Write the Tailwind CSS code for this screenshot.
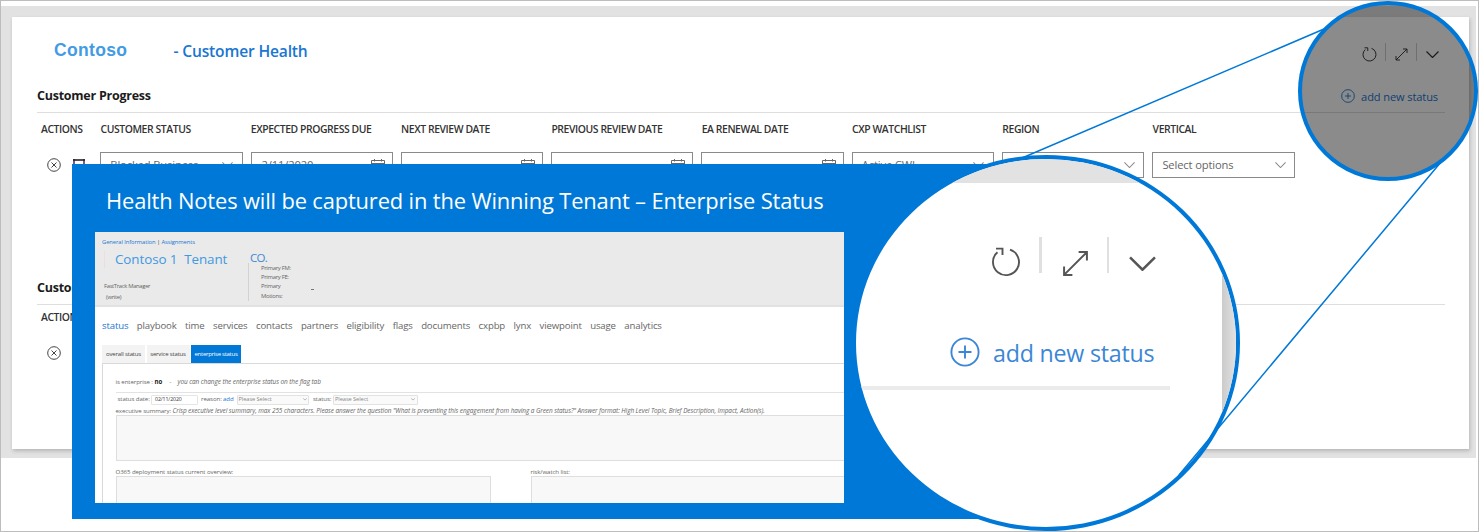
<!DOCTYPE html>
<html lang="en">
<head>
<meta charset="utf-8">
<title>Customer Health</title>
<script src="https://cdn.jsdelivr.net/npm/@tailwindcss/browser@4"></script>
</head>
<body class="bg-white">
<svg class="hidden">
  <symbol id="refresh" viewBox="0 0 30 30"><path d="M19 2.7A13 13 0 1 1 6.5 5.2M5 1.6H11.5V8" fill="none" stroke="currentColor" stroke-width="1.9"/></symbol>
  <symbol id="expand" viewBox="0 0 26 26"><path d="M2 24 24 2M16 2H24V10M2 16V24H10" fill="none" stroke="currentColor" stroke-width="1.9"/></symbol>
  <symbol id="chevron" viewBox="0 0 26 14"><path d="M1 1 13 13 25 1" fill="none" stroke="currentColor" stroke-width="2.4"/></symbol>
  <symbol id="plus" viewBox="0 0 30 30"><path d="M15 8.5V21.5M8.5 15H21.5" fill="none" stroke="currentColor" stroke-width="1.9"/><circle cx="15" cy="15" r="13.6" fill="none" stroke="currentColor" stroke-width="1.9"/></symbol>
  <symbol id="cancel" viewBox="0 0 14 14"><circle cx="7" cy="7" r="6.3" fill="none" stroke="currentColor"/><path d="M4.5 4.5 9.5 9.5M9.5 4.5 4.5 9.5" stroke="currentColor"/></symbol>
  <symbol id="calendar" viewBox="0 0 14 13"><path d="M.5 1.5H13.5V12.5H.5ZM.5 4.5H13.5M3.5 0V2.5M10.5 0V2.5" fill="none" stroke="currentColor"/></symbol>
</svg>

<div class="relative h-[532px] w-[1479px] overflow-hidden border border-[#bdbdbd] bg-white pt-[5px] pr-[2px] font-['Open_Sans','Noto_Sans',sans-serif]">
  <main class="h-[452px] bg-[#e2e2e2] pt-[11px] pr-[7px] pl-[11px]">
    <section class="h-[432px] bg-white pl-[25px] pr-[24px] shadow-[1px_2px_4px_rgba(0,0,0,0.2)]">
      <header class="flex h-[68px] items-center pl-[17px] pt-[2px]">
        <h1 class="mt-[-3px] w-[119.5px] font-['Liberation_Sans',sans-serif] text-[17.5px] leading-none font-bold tracking-[0.35px] text-[#429be3]">Contoso</h1>
        <h2 class="text-[15.6px] leading-none font-semibold tracking-[-0.17px] whitespace-nowrap text-[#1976d2]">- Customer Health</h2>
        <div class="mt-[5px] ml-auto flex items-center pr-[6px] text-[#333]">
          <svg class="size-[15px]"><use href="#refresh"/></svg>
          <i class="mt-[-6px] ml-[8px] h-[18px] w-px bg-[#ccc]"></i>
          <svg class="ml-[9px] size-[13px]"><use href="#expand"/></svg>
          <i class="mt-[-6px] ml-[8px] h-[18px] w-px bg-[#ccc]"></i>
          <svg class="ml-[9px] h-[7px] w-[13px]"><use href="#chevron"/></svg>
        </div>
      </header>

      <div class="flex h-[28px] items-center justify-between border-b border-[#dedede] pr-[7px] pb-[5px]">
        <h3 class="mt-px text-[12.5px] leading-none font-bold tracking-[-0.25px] text-[#1b1b1b]">Customer Progress</h3>
        <a class="flex items-center gap-[6px] text-[11.1px] leading-none tracking-[-0.12px] text-[#1976d2]"><svg class="size-[14px]"><use href="#plus"/></svg><span class="mt-px">add new status</span></a>
      </div>
      <div class="flex h-[32px] items-center pt-px text-[10.4px] leading-none font-semibold tracking-[-0.42px] whitespace-nowrap text-[#333]">
        <span class="w-[63.5px] pl-[4px]">ACTIONS</span>
        <span class="w-[150.3px]">CUSTOMER STATUS</span>
        <span class="w-[150.3px]">EXPECTED PROGRESS DUE</span>
        <span class="w-[150.3px]">NEXT REVIEW DATE</span>
        <span class="w-[150.3px]">PREVIOUS REVIEW DATE</span>
        <span class="w-[150.3px]">EA RENEWAL DATE</span>
        <span class="w-[150.3px]">CXP WATCHLIST</span>
        <span class="w-[150.3px]">REGION</span>
        <span>VERTICAL</span>
      </div>
      <div class="flex h-[40px] items-center text-[11.2px] leading-none tracking-[-0.14px] text-[#666]">
        <div class="flex w-[63.3px] items-center gap-[12px] pl-[10px] text-[#444]">
          <svg class="size-[14px]"><use href="#cancel"/></svg>
          <svg class="h-[12px] w-[12px]" viewBox="0 0 12 12"><path d="M1 0V12H11V0" fill="none" stroke="#6b2a7a" stroke-width="1.6"/><path d="M0 1H12" stroke="#222" stroke-width="1.6"/></svg>
        </div>
        <div class="grid grid-cols-[repeat(8,142.3px)] gap-[8px]">
          <div class="flex h-[26px] items-center justify-between border border-[#8a8a8a] px-[9px]">Blocked Business<svg class="h-[6px] w-[11px] text-[#888]"><use href="#chevron"/></svg></div>
          <div class="flex h-[26px] items-center justify-between border border-[#8a8a8a] pr-[7px] pl-[10px]">2/11/2020<svg class="h-[13px] w-[14px]"><use href="#calendar"/></svg></div>
          <div class="flex h-[26px] items-center justify-end border border-[#8a8a8a] pr-[7px]"><svg class="h-[13px] w-[14px]"><use href="#calendar"/></svg></div>
          <div class="flex h-[26px] items-center justify-end border border-[#8a8a8a] pr-[7px]"><svg class="h-[13px] w-[14px]"><use href="#calendar"/></svg></div>
          <div class="flex h-[26px] items-center justify-end border border-[#8a8a8a] pr-[7px]"><svg class="h-[13px] w-[14px]"><use href="#calendar"/></svg></div>
          <div class="flex h-[26px] items-center justify-between border border-[#8a8a8a] px-[9px]">Active CWL<svg class="h-[6px] w-[11px] text-[#888]"><use href="#chevron"/></svg></div>
          <div class="flex h-[26px] items-center justify-end border border-[#8a8a8a] px-[8px]"><svg class="h-[6px] w-[11px] text-[#888]"><use href="#chevron"/></svg></div>
          <div class="flex h-[26px] items-center justify-between border border-[#8a8a8a] pr-[8px] pl-[9px]">Select options<svg class="h-[6px] w-[11px] text-[#888]"><use href="#chevron"/></svg></div>
        </div>
      </div>

      <div class="mt-[92px] flex h-[28px] items-center border-b border-[#dedede] pb-[4px]">
        <h3 class="text-[12.5px] leading-none font-bold tracking-[-0.25px] text-[#1b1b1b]">Customer</h3>
      </div>
      <div class="flex h-[25px] items-center pl-[4px] text-[10.4px] leading-none font-semibold tracking-[-0.42px] text-[#333]">ACTIONS</div>
      <div class="flex h-[46px] items-center pl-[10px] text-[#444]"><svg class="size-[14px]"><use href="#cancel"/></svg></div>
    </section>
  </main>

  <!-- Callout panel over the card -->
  <section class="absolute top-[163px] left-[70.5px] h-[355px] w-[975px] bg-[#0078d7] pl-[23.5px]">
    <h2 class="flex h-[68px] items-center pt-[6px] pl-[11px] text-[21.9px] leading-none tracking-[-0.15px] whitespace-nowrap text-white">Health Notes will be captured in the Winning Tenant – Enterprise Status</h2>
    <div class="h-[271px] w-[749px] overflow-hidden bg-white text-[6.1px] leading-none tracking-[-0.08px] whitespace-nowrap text-[#666]">
      <div class="flex h-[75px] border-b-2 border-[#e2e2e2] bg-[#eaeaea] pl-[7px]">
        <div class="w-[147px]">
          <p class="pt-[7px] text-[5.8px] leading-[6px] text-[#1976d2]">General Information <span class="text-[#333]">|</span> Assignments</p>
          <p class="mt-[6px] ml-[2px] border-l border-[#f0dcdc] pl-[10px] text-[13.4px] leading-[17px] whitespace-pre text-[#4199e1]">Contoso 1  Tenant</p>
          <p class="mt-[15px] pl-[2px] text-[5.9px] leading-[7px] tracking-[-0.34px]">FastTrack Manager</p>
          <p class="mt-[4px] pl-[4px] text-[5.9px] leading-[6px] tracking-[-0.3px]">(write)</p>
        </div>
        <div class="pt-[20px]">
          <p class="pl-px text-[11.5px] leading-[11px] tracking-[-0.7px] text-[#4189d1]">CO.</p>
          <div class="-ml-[1px] flex h-[38px] border-l border-[#d2d2d2] pt-px pl-[12px] text-[5.9px] leading-[9.2px] tracking-[-0.3px]">
            <div class="w-[50px]">Primary FM:<br>Primary FE:<br>Primary<br>Motions:</div>
            <i class="mt-[25px] h-px w-[3px] bg-[#777]"></i>
          </div>
        </div>
      </div>
      <nav class="flex h-[38px] items-center gap-[8.45px] pl-[7px] text-[9.6px] tracking-[-0.14px] text-[#666]">
        <span class="text-[#1976d2]">status</span><span>playbook</span><span>time</span><span>services</span><span>contacts</span><span>partners</span><span>eligibility</span><span>flags</span><span>documents</span><span>cxpbp</span><span>lynx</span><span>viewpoint</span><span>usage</span><span>analytics</span>
      </nav>
      <div class="flex h-[18px] gap-[1.5px] pl-[7px] text-[6px] tracking-[-0.17px] text-[#444]">
        <span class="flex w-[43px] items-center justify-center bg-[#f3f3f3]">overall status</span>
        <span class="flex w-[43px] items-center justify-center bg-[#f3f3f3]">service status</span>
        <span class="flex w-[50px] items-center justify-center bg-[#0078d7] tracking-[-0.26px] text-white">enterprise status</span>
      </div>
      <div class="ml-[7px] h-[150px] border-t border-l border-[#d9d9d9] pt-[14px] pl-[12.5px]">
        <p class="flex h-[14.5px] border-b border-[#e2e2e2] text-[6.1px] leading-[8px]"><span class="w-[39px]">is enterprise :</span><b class="w-[15px] text-[#222]">no</b><span class="w-[8px]">-</span><i class="text-[6.45px]">you can change the enterprise status on the flag tab</i></p>
        <div class="flex h-[14px] items-center pl-[2px]">
          <span class="w-[33.5px]">status date:</span>
          <span class="flex h-[10px] w-[47px] items-center rounded-[1px] border border-[#e5e5e5] pl-[3px] text-[5.2px] text-[#333]">02/11/2020</span>
          <span class="ml-[3px] w-[22px]">reason:</span>
          <span class="w-[13.5px] text-[#1976d2]">add</span>
          <span class="flex h-[10px] w-[72.5px] items-center justify-between rounded-[1px] border border-[#e2e2e2] bg-[#fafafa] pr-[1px] pl-[1px] text-[5.7px] text-[#888]">Please Select<svg class="h-[2.5px] w-[4px] text-[#333]"><use href="#chevron"/></svg></span>
          <span class="ml-[4px] w-[20px]">status:</span>
          <span class="flex h-[10px] w-[84.5px] items-center justify-between rounded-[1px] border border-[#e2e2e2] bg-[#fafafa] pr-[2px] pl-[1px] text-[5.7px] text-[#888]">Please Select<svg class="h-[2.5px] w-[4px] text-[#333]"><use href="#chevron"/></svg></span>
        </div>
        <p class="h-[8px] leading-[8px]">executive summary: <i class="text-[6.44px]">Crisp executive level summary, max 255 characters. Please answer the question "What is preventing this engagement from having a Green status?" Answer format: High Level Topic, Brief Description, Impact, Action(s).</i></p>
        <div class="h-[46px] rounded-l-[1px] border border-r-0 border-[#dedede] bg-[#f8f8f8]"></div>
        <div class="mt-[7px] flex gap-[40px] leading-[8px]">
          <div class="w-[375px]">O365 deployment status current overview:<div class="h-[40px] border border-[#dedede] bg-[#f8f8f8]"></div></div>
          <div class="flex-1">risk/watch list:<div class="h-[40px] border border-r-0 border-[#dedede] bg-[#f8f8f8]"></div></div>
        </div>
      </div>
    </div>
  </section>

  <!-- Magnified lens -->
  <section class="absolute top-[154px] left-[851px] h-[376px] w-[388px] overflow-hidden rounded-[50%] border-4 border-[#0078d7] bg-white">
    <div class="h-[24px] bg-[#e2e2e2]"></div>
    <div class="flex h-[345px]">
      <div class="w-[366px] pt-[54px]">
        <div class="flex h-[36px] pl-[135px] text-[#555]">
          <svg class="mt-[10px] size-[30px]"><use href="#refresh"/></svg>
          <i class="ml-[18px] h-[36px] w-[2.5px] bg-[#e0e0e0]"></i>
          <svg class="mt-[13px] ml-[20px] size-[27px]"><use href="#expand"/></svg>
          <i class="ml-[18px] h-[36px] w-[2.5px] bg-[#e0e0e0]"></i>
          <svg class="mt-[19px] ml-[20px] h-[15px] w-[27px]"><use href="#chevron"/></svg>
        </div>
        <div class="mt-[48px] flex h-[69px] w-[313.5px] items-start border-b-4 border-[#ebebeb] pl-[93.5px] text-[23.2px] leading-[30px] tracking-[-0.2px] whitespace-nowrap text-[#3b86d6]">
          <svg class="mt-[16px] size-[30px] shrink-0"><use href="#plus"/></svg><span class="mt-[17px] ml-[13.5px]">add new status</span>
        </div>
      </div>
      <div class="flex-1 bg-linear-to-r from-[#cbcbcb] to-[#e2e2e2]"></div>
    </div>
  </section>

  <!-- Shaded source circle and its connector lines -->
  <svg class="absolute -top-px -left-px h-[532px] w-[1479px]" viewBox="0 0 1479 532">
    <path d="M1324 29 1022 158M1441 162 1179 475" stroke="#0078d7" stroke-width="1.5"/>
    <circle cx="1388" cy="91" r="88" fill="#000" fill-opacity=".455" stroke="#0078d7" stroke-width="4"/>
  </svg>
</div>
</body>
</html>
